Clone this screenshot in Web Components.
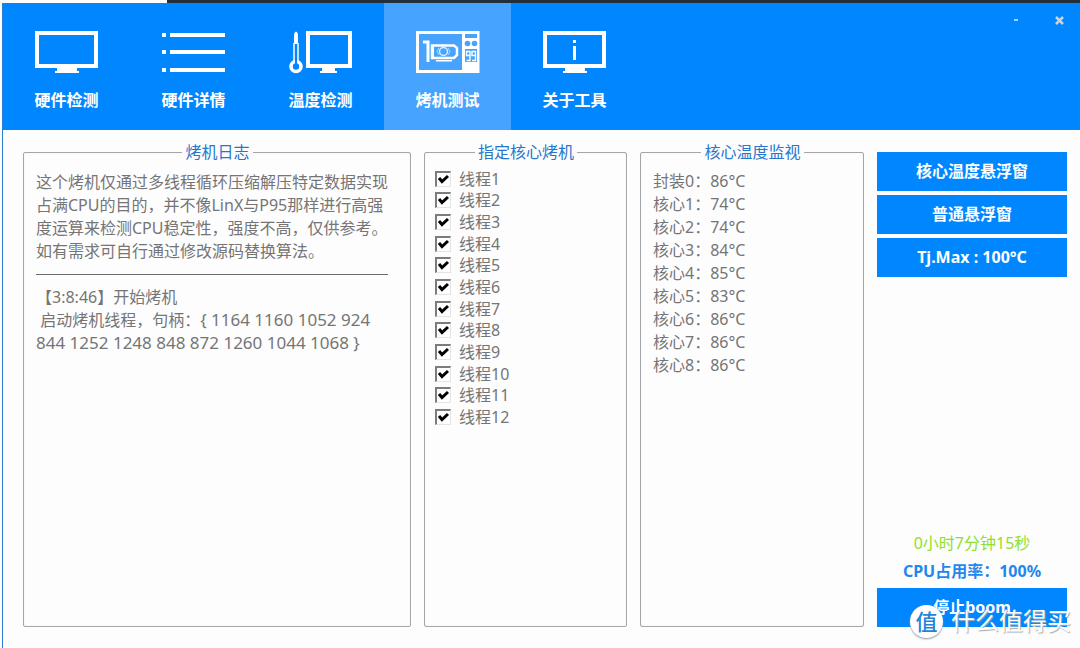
<!DOCTYPE html>
<html lang="zh-CN">
<head>
<meta charset="utf-8">
<title>烤机测试</title>
<style>
  html, body { margin: 0; }
  body {
    --accent: #0087ff;
    --accent-active: #46a3ff;
    --line: #a6a6aa;
    --ink: #757575;
    font: 16px/23px "Noto Sans", "Noto Sans CJK SC", sans-serif;
    color: var(--ink);
    background: #fdfdfe;
  }
</style>
</head>
<body>
<app-window>
  <nav-tab slot="tabs" icon="monitor">硬件检测</nav-tab>
  <nav-tab slot="tabs" icon="list">硬件详情</nav-tab>
  <nav-tab slot="tabs" icon="thermo">温度检测</nav-tab>
  <nav-tab slot="tabs" icon="oven" active>烤机测试</nav-tab>
  <nav-tab slot="tabs" icon="about">关于工具</nav-tab>

  <group-panel label="烤机日志"><burn-log></burn-log></group-panel>
  <group-panel label="指定核心烤机"><thread-list count="12"></thread-list></group-panel>
  <group-panel label="核心温度监视"><temp-list values="86,74,74,84,85,83,86,86,86"></temp-list></group-panel>
  <side-panel>
    <action-button>核心温度悬浮窗</action-button>
    <action-button>普通悬浮窗</action-button>
    <action-button>Tj.Max : 100°C</action-button>
    <span slot="time">0小时7分钟15秒</span>
    <span slot="usage">CPU占用率：100%</span>
    <action-button slot="stop">停止boom</action-button>
  </side-panel>
  <site-mark slot="mark" badge="值">什么值得买</site-mark>
</app-window>

<script>
const define = (name, html, setup) => customElements.define(name, class extends HTMLElement {
  constructor() {
    super();
    this.attachShadow({ mode: "open" }).innerHTML = html;
  }
  connectedCallback() { if (setup) setup(this, this.shadowRoot); }
});

const ICONS = {
  monitor: `<path d="M2 3H61V36H2Z" fill="none" stroke="#fff" stroke-width="4"/><path d="M22 38H42V41H44V43H20V41H22Z"/>`,
  list: `<path d="M0 3h4v4h-4zM8 3h55v4H8zM0 20h4v4h-4zM8 20h55v4H8zM0 38h4v4h-4zM8 38h55v4H8z"/>`,
  thermo: `<path d="M5 4Q7 -1 9 4V14H5Z"/><path d="M5 13V32M9 13V32" fill="none" stroke="#fff" stroke-width="1.5"/><circle cx="7" cy="36.5" r="5" fill="none" stroke="#fff" stroke-width="3.6"/><path d="M6 29h2v6h-2z" fill="#0087ff"/><path d="M19 3H61V36H19Z" fill="none" stroke="#fff" stroke-width="4"/><path d="M33 38H46V41H48V43H31V41H33Z"/>`,
  oven: `<path d="M1.500 2.500H62V41.500H1.500Z" fill="none" stroke="#fff" stroke-width="3"/><path d="M46 2H63V42H46Z"/>
    <path d="M49 4h12v4H49zM49 19h12v13H49z" fill="#46a3ff"/><circle cx="51.500" cy="13.500" r="2.800" fill="#46a3ff"/><circle cx="58.500" cy="13.500" r="2.800" fill="#46a3ff"/>
    <path d="M53.500 25.500h-3v-4h3.500v9h-3.500M59 25.500h-3v-4h3.500v9h-3.500" fill="none" stroke="#fff" stroke-width="1.400"/>
    <path d="M7 12H12V32" fill="none" stroke="#fff" stroke-width="3"/><path d="M16 15.500H38L41 18V25L38 28H16Z" fill="none" stroke="#fff" stroke-width="2.500"/>
    <path d="M15 15h3v14h-3z"/><path d="M23 18L21 21.500L23 25M32 18L34 21.500L32 25" fill="none" stroke="#fff" stroke-width="1" opacity=".6"/>
    <circle cx="27.500" cy="21.500" r="4" fill="none" stroke="#fff" stroke-width="1.500" opacity=".8"/><path d="M20 30h16v1.500H20z"/>`,
  about: `<path d="M2 3H61V36H2Z" fill="none" stroke="#fff" stroke-width="4"/><path d="M22 38H42V41H44V43H20V41H22Z"/><path d="M30 10h3v3h-3zM30 16h3v14h-3z"/>`
};

define("app-window", `
  <style>
    :host { display: flex; flex-direction: column; min-height: 100vh; position: relative; }
    .edge { height: 3px; background: linear-gradient(90deg, #fdfdfe 167px, #23303c 167px); }
    .frame { flex: 1; display: flex; flex-direction: column; margin-left: 2px; border-left: 1px solid #2b7fd0; }
    header { display: flex; height: 127px; background: var(--accent); }
    nav { display: flex; }
    .controls { margin-left: auto; display: flex; align-items: start; padding: 6px 8px 0 0; gap: 20px; }
    .controls button { width: 24px; height: 20px; padding: 0; border: 0; background: none; }
    .controls svg { display: block; }
    main { flex: 1; display: grid; grid-template-columns: 388fr 203fr 224fr 190fr; gap: 13px; padding: 12px 13px 21px 20px; }
  </style>
  <div class="edge"></div>
  <div class="frame">
    <header>
      <nav><slot name="tabs"></slot></nav>
      <div class="controls">
        <button aria-label="最小化"><svg width="24" height="20"><path d="M10 11h4" stroke="#a5d4ff" stroke-width="2"/></svg></button>
        <button aria-label="关闭"><svg width="24" height="20"><path d="M8 8L15 15M15 8L8 15" stroke="#c8d4dc" stroke-width="2.500"/></svg></button>
      </div>
    </header>
    <main><slot></slot></main>
  </div>
  <slot name="mark"></slot>`);

define("nav-tab", `
  <style>
    :host { display: block; width: 127px; }
    button { width: 100%; height: 100%; border: 0; padding: 27px 0 0; background: none; color: #fff; font: inherit; font-weight: 700;
      display: flex; flex-direction: column; align-items: center; gap: 15px; }
    :host([active]) button { background: var(--accent-active); }
    svg { display: block; fill: #fff; }
  </style>
  <button><svg width="64" height="44" viewBox="0 0 64 44"></svg><slot></slot></button>`,
  (el, root) => { root.querySelector("svg").innerHTML = ICONS[el.getAttribute("icon")]; });

define("group-panel", `
  <style>
    :host { display: grid; }
    fieldset { min-width: 0; margin: 0; padding: 8px 11px 0 12px; border: 1px solid var(--line); box-shadow: inset 0 0 1px #d4d4d8; border-radius: 2px; }
    legend { margin: 0 auto; padding: 0 3px; line-height: 20px; color: #2877cc; }
  </style>
  <fieldset><legend></legend><slot></slot></fieldset>`,
  (el, root) => { root.querySelector("legend").textContent = el.getAttribute("label"); });

define("burn-log", `
  <style>
    :host { display: block; padding-top: 1px; }
    p { margin: 0; white-space: pre; }
    hr { margin: 11px 11px 11px 0; border: 0; border-top: 1px solid #6c6c6c; }
    .num { font-size: 17px; line-height: 1; }
  </style>
  <p>这个烤机仅通过多线程循环压缩解压特定数据实现
占满CPU的目的，并不像LinX与P95那样进行高强
度运算来检测CPU稳定性，强度不高，仅供参考。
如有需求可自行通过修改源码替换算法。</p>
  <hr>
  <p>【3:8:46】开始烤机</p>
  <p><span> 启动烤机线程，句柄：</span><span class="num">{ 1164 1160 1052 924</span></p>
  <p><span class="num">844 1252 1248 848 872 1260 1044 1068 }</span></p>`);

define("thread-list", `
  <style>
    :host { display: grid; grid-auto-rows: 1fr; height: 260px; margin: -2px 0 0 -2px; }
    label { display: flex; align-items: center; gap: 8px; line-height: 20px; }
    input { appearance: none; width: 16px; height: 16px; margin: 0; border: 1px solid #e4e4e4; border-top: 2px solid #7c7c7c; border-left: 2px solid #7c7c7c;
      background: #fff url("data:image/svg+xml,%3Csvg xmlns='http://www.w3.org/2000/svg' viewBox='0 0 13 13'%3E%3Cpath d='M2 5L5 8.500L11 3' fill='none' stroke='%23000' stroke-width='3'/%3E%3C/svg%3E") center / 13px no-repeat; }
    input:not(:checked) { background-image: none; }
  </style>`,
  (el, root) => {
    for (let i = 1; i <= +el.getAttribute("count"); i++) {
      root.append(Object.assign(document.createElement("label"), { innerHTML: `<input type="checkbox" checked><span>线程${i}</span>` }));
    }
  });

define("temp-list", `
  <style>
    :host { display: block; }
    ul { margin: 0; padding: 0; list-style: none; }
  </style>
  <ul></ul>`,
  (el, root) => {
    root.querySelector("ul").innerHTML = el.getAttribute("values").split(",")
      .map((v, i) => `<li>${i ? "核心" : "封装"}${i}：${v}°C</li>`).join("");
  });

define("action-button", `
  <style>
    :host { display: block; }
    button { display: block; width: 100%; height: 39px; padding: 0; border: 0; background: var(--accent); color: #fff; font: inherit; font-weight: 700; }
  </style>
  <button><slot></slot></button>`);

define("side-panel", `
  <style>
    :host { display: flex; flex-direction: column; padding-top: 10px; text-align: center; }
    .top { display: grid; gap: 4px; }
    .status { margin-top: auto; display: grid; gap: 5px; padding-bottom: 5px; color: #8fe02c; }
    .usage { color: #1f88ee; font-weight: 700; }
  </style>
  <div class="top"><slot></slot></div>
  <div class="status"><div><slot name="time"></slot></div><div class="usage"><slot name="usage"></slot></div></div>
  <slot name="stop"></slot>`);

define("site-mark", `
  <style>
    :host { position: absolute; right: 9px; bottom: 10px; display: flex; align-items: center; gap: 8px; pointer-events: none;
      color: #fff; font-size: 24px; line-height: 34px; text-shadow: 1px 1px 1px #a4a9ae; }
    .badge { width: 33px; height: 33px; border-radius: 50%; background: #fff; color: #2484d8; text-align: center; font-size: 22px; line-height: 32px;
      font-weight: 500; text-shadow: none; box-shadow: 0 1px 2px #8e969e; }
  </style>
  <span class="badge"></span><span><slot></slot></span>`,
  (el, root) => { root.querySelector(".badge").textContent = el.getAttribute("badge"); });
</script>
</body>
</html>
